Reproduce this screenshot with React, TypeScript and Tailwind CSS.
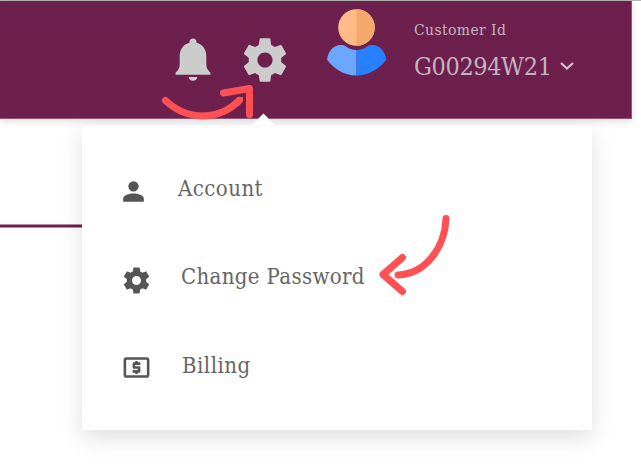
import React from "react";
import { MdLocalAtm } from "react-icons/md";

function Gear({ className }: { className: string }) {
  return (
    <svg viewBox="0 0 24 24" fill="currentColor" className={className}>
      <path d="M19.43 12.98c.04-.32.07-.64.07-.98s-.03-.66-.07-.98l2.11-1.65c.19-.15.24-.42.12-.64l-2-3.46c-.12-.22-.39-.3-.61-.22l-2.49 1c-.52-.4-1.08-.73-1.69-.98l-.38-2.65C14.46 2.18 14.25 2 14 2h-4c-.25 0-.46.18-.49.42l-.38 2.65c-.61.25-1.17.59-1.69.98l-2.49-1c-.23-.09-.49 0-.61.22l-2 3.46c-.13.22-.07.49.12.64l2.11 1.65c-.04.32-.07.65-.07.98s.03.66.07.98l-2.11 1.65c-.19.15-.24.42-.12.64l2 3.46c.12.22.39.3.61.22l2.49-1c.52.4 1.08.73 1.69.98l.38 2.65c.03.24.24.42.49.42h4c.25 0 .46-.18.49-.42l.38-2.65c.61-.25 1.17-.59 1.69-.98l2.49 1c.23.09.49 0 .61-.22l2-3.46c.12-.22.07-.49-.12-.64l-2.11-1.65zM12 15.5c-1.93 0-3.5-1.57-3.5-3.5s1.57-3.5 3.5-3.5 3.5 1.57 3.5 3.5-1.57 3.5-3.5 3.5z" />
    </svg>
  );
}

function Person({ className }: { className: string }) {
  return (
    <svg viewBox="0 0 24 24" fill="currentColor" className={className}>
      <circle cx="12" cy="8" r="4" />
      <path d="M4 20v-2.400c0-2.500 4.500-4 8-4s8 1.500 8 4V20z" />
    </svg>
  );
}

function Bell() {
  return (
    <svg viewBox="0 0 36 43" className="mt-[37px] h-[43px] w-[36px]" fill="#cccccc">
      <path d="M18 .5c-2.200 0-3.500 1.400-3.500 3.500v.8C8.500 6.300 4.700 11.500 4.700 18v8.500c0 3.500-1.200 5.200-4.200 8.200V36.700h35v-2c-3-3-4.200-4.700-4.200-8.200V18c0-6.500-3.800-11.700-9.800-13.200V4c0-2.100-1.300-3.500-3.500-3.500z" />
      <path d="M13.700 39h8.600c0 2.200-1.900 3.800-4.300 3.800s-4.300-1.600-4.300-3.800z" />
    </svg>
  );
}

function Avatar() {
  return (
    <svg viewBox="0 0 62 69" className="mt-[7px] ml-[35px] h-[69px] w-[62px]">
      <circle cx="30.500" cy="19.500" r="18.300" fill="#ffbb85" />
      <path d="M30.500 1.200a18.300 18.300 0 0 1 0 36.600z" fill="#f5a76c" />
      <path d="M30.500 42c-4.500 0-7.500-1.200-10.500-3.500-1.500-1.200-3-1.500-5-1.500C6.500 37 2.500 43.500 1 51.500 8 61 18 67.500 30.500 67.500z" fill="#6ba6ff" />
      <path d="M30.500 42c4.500 0 7.500-1.200 10.500-3.500 1.500-1.200 3-1.500 5-1.500 8.500 0 12.500 6.500 14.500 14.500-7.500 9.500-17.500 16-30 16z" fill="#2680ff" />
    </svg>
  );
}

export default function App() {
  return (
    <div className="relative h-[464px] w-[641px] overflow-hidden bg-white font-['DejaVu_Serif_Condensed','DejaVu_Serif',serif] [font-stretch:condensed]">
      <div className="h-px bg-[#b9b9b9]" />
      <header className="relative z-10 flex h-[118px] w-[632px] items-start border-r border-b border-[#925776] bg-[#6d1f4d] pl-[175px] shadow-[0_2px_8px_rgba(0,0,0,0.15)]">
        <Bell />
        <Gear className="mt-[33px] ml-[28px] h-[52px] w-[52px] shrink-0 text-[#cccccc]" />
        <Avatar />
        <div className="pl-[26px] text-[#c4b5c0]">
          <div className="mt-[18px] h-[22px] text-[15.500px] leading-[22px] tracking-[0.400px] whitespace-nowrap">Customer Id</div>
          <div className="mt-[9px] flex items-center gap-[8px]">
            <span className="text-[25px] leading-[34px] tracking-[-0.400px]">G00294W21</span>
            <svg viewBox="0 0 14 9" className="mb-[2px] h-[9px] w-[14px]" fill="none" stroke="#cfc3cc" strokeWidth="2.300">
              <path d="M1 1l6 5.500 6-5.500" />
            </svg>
          </div>
        </div>
      </header>

      <div className="flex items-start">
        <div className="flex w-[82px] flex-col pt-[105px]">
          <div className="h-[4px] border-y border-[#b78da4] bg-[#6d1f4d]" />
        </div>
        <main className="mt-[6px] h-[305px] w-[510px] bg-white pt-[41px] pl-[41px] text-[22px] text-[#666666] shadow-[0_8px_22px_rgba(0,0,0,0.13)]">
          <div className="flex h-[44px] items-center">
            <Person className="mt-[6px] -ml-[5px] h-[31px] w-[31px] text-[#555555]" />
            <span className="ml-[29px] tracking-[0.450px]">Account</span>
          </div>
          <div className="mt-[45px] flex h-[44px] items-center">
            <Gear className="mt-[6px] -ml-[2px] h-[31px] w-[31px] text-[#555555]" />
            <span className="-mt-[1px] ml-[29px] tracking-[0.350px]">Change Password</span>
          </div>
          <div className="mt-[44px] flex h-[44px] items-center">
            <MdLocalAtm className="mt-[4px] -ml-[2px] h-[31px] w-[31px] text-[#555555]" />
            <span className="ml-[30px] tracking-[0.500px]">Billing</span>
          </div>
        </main>
      </div>

      <svg viewBox="0 0 641 464" className="pointer-events-none absolute inset-0 z-20 h-[464px] w-[641px]" fill="none" stroke="#ff5154" strokeWidth="7" strokeLinecap="round" strokeLinejoin="round">
        <path d="M263.500 113.500L275 125H252z" fill="#fff" stroke="none" />
        <path d="M165.500 100.500C187 121 219 121 239 100.500" />
        <path d="M235.500 101.500L239 97H243V101L239 106z" fill="#ff5154" stroke="none" />
        <path d="M223.500 93L249.500 88.500V114.500" />
        <path d="M446 218.500C445 247 426 274 398 275" />
        <path d="M402.500 257.500L383 274.500L402.500 291.500" />
      </svg>
    </div>
  );
}
